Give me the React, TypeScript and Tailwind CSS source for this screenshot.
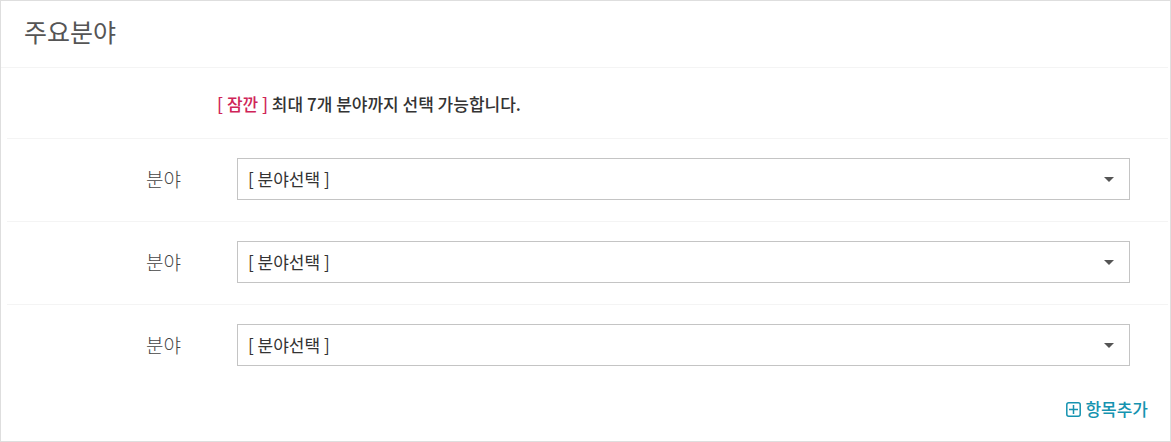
const fields = [
  { id: "field-1", label: "분야" },
  { id: "field-2", label: "분야" },
  { id: "field-3", label: "분야" },
];

function FieldRow({ id, label, last }: { id: string; label: string; last: boolean }) {
  return (
    <div
      className={
        last
          ? "flex items-center pt-[19px] pb-[21px]"
          : "flex items-center border-b border-[#f4f4f4] pt-[19px] pb-[21px]"
      }
    >
      <label htmlFor={id} className="w-[174px] shrink-0 text-right text-[19px] leading-7 font-light text-[#444]">
        {label}
      </label>
      <div className="relative mr-[38px] ml-14 grow">
        <select
          id={id}
          className="block h-[42px] w-full appearance-none rounded-none border border-[#c4c4c4] bg-white px-[10px] text-[17px] text-[#333] outline-none"
        >
          <option>[ 분야선택 ]</option>
        </select>
        {/* Caret */}
        <svg
          viewBox="0 0 10 5"
          className="pointer-events-none absolute top-[19px] right-4 h-[5px] w-[10px] fill-[#555]"
        >
          <path d="M0 0h10L5 5z" />
        </svg>
      </div>
    </div>
  );
}

export default function App() {
  return (
    <section className="border border-[#dedede] bg-white pb-5 font-['Noto_Sans_CJK_KR',sans-serif]">
      <header className="mr-[2px] border-b border-[#f4f4f4] px-[23px] pt-[13px] pb-[19px]">
        <h2 className="text-[25px] leading-[34px] text-[#555]">주요분야</h2>
      </header>

      <div className="mr-[2px] ml-[6px]">
        {/* Notice */}
        <p className="border-b border-[#f4f4f4] pt-[23px] pb-[21px] pl-[210px] text-[17px] leading-[26px] font-medium text-[#333]">
          <span className="text-[#cf2458]">[ 잠깐 ]</span> 최대 7개 분야까지 선택 가능합니다.
        </p>

        {fields.map((field, i) => (
          <FieldRow key={field.id} id={field.id} label={field.label} last={i === fields.length - 1} />
        ))}
      </div>

      {/* Add item */}
      <div className="flex justify-end pt-[10px] pr-[22px]">
        <button type="button" className="flex items-center gap-1 text-[17px] leading-6 font-medium text-[#1593b0]">
          <svg viewBox="0 0 15 15" className="h-[15px] w-[15px] fill-none stroke-current" strokeWidth="1.5">
            <rect x="0.8" y="0.8" width="13.4" height="13.4" rx="2" />
            <path d="M7.5 3v9M3 7.5h9" />
          </svg>
          항목추가
        </button>
      </div>
    </section>
  );
}
